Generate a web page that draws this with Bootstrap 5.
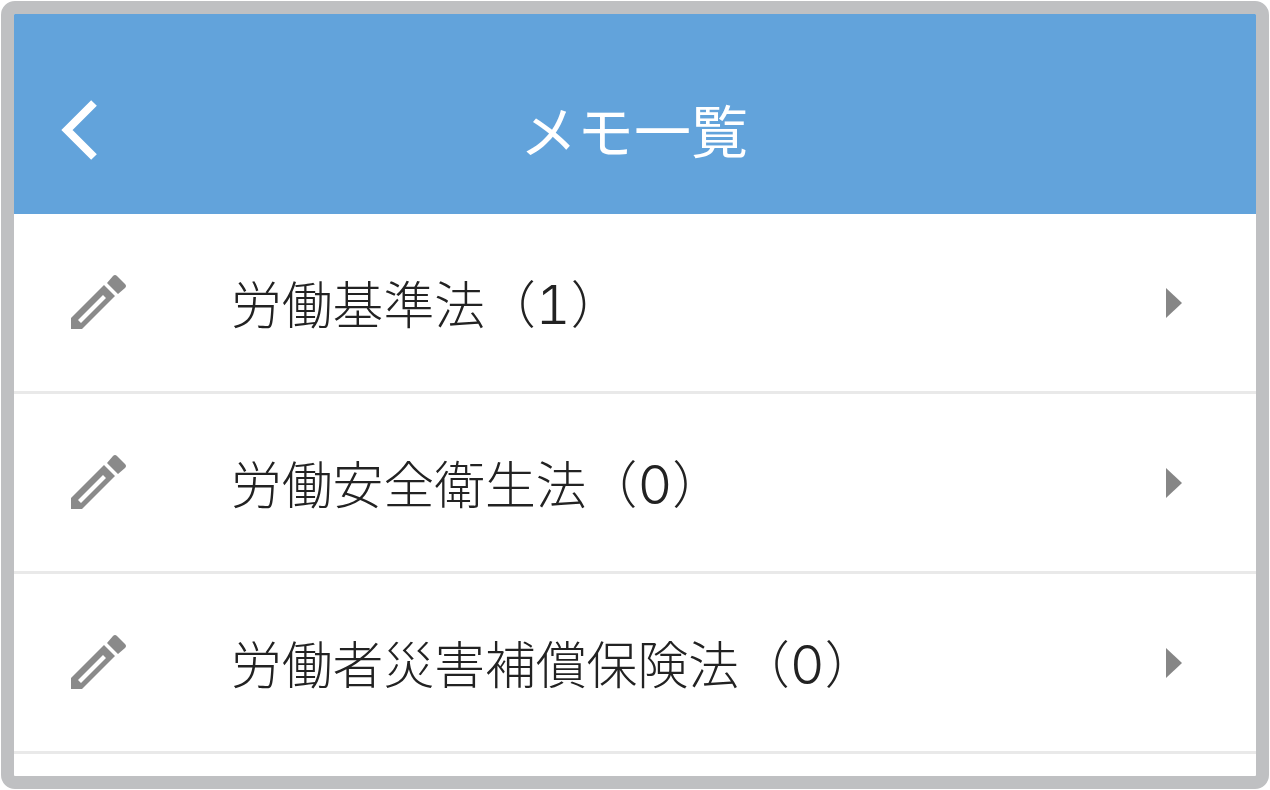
<!DOCTYPE html>
<html lang="ja">
<head>
  <meta charset="UTF-8">
  <title>メモ一覧</title>
  <link href="https://cdn.jsdelivr.net/npm/bootstrap@5.3.3/dist/css/bootstrap.min.css" rel="stylesheet">
  <style>
    html, body {
      height: 100%;
      background-color: #fff;
      overflow: hidden;
    }
    body {
      padding: 1px;
      font-family: "Noto Sans CJK JP", "Liberation Sans", sans-serif;
    }
    .phone-frame {
      height: 788px;
      border: 13px solid #bfc0c2;
      border-radius: 14px;
      background-color: #fff;
      overflow: hidden;
    }
    .memo-header {
      height: 200px;
      padding: 32px 0 0 47px;
      background-color: #62a3db;
      color: #fff;
      font-size: 57px;
      font-weight: 400;
    }
    .memo-title {
      inset: 0;
      padding-right: 2px;
      line-height: 228px;
    }
    .memo-row {
      height: 180px;
      padding: 0 74px 0 57px;
      border-bottom: 3px solid #e9e9e9;
      color: #222;
      font-size: 50.8px;
      font-weight: 300;
    }
    .memo-label {
      margin-left: 104px;
      padding-bottom: 2px;
      line-height: 60px;
    }
    .memo-num {
      font-family: Inter, "Liberation Sans", sans-serif;
      font-size: 54px;
      font-weight: 300;
      font-variant-numeric: tabular-nums;
      line-height: 1;
    }
  </style>
</head>
<body>

<div class="phone-frame">
  <div class="memo-header d-flex align-items-center position-relative">
    <svg class="position-relative z-1" width="38" height="60" viewBox="0 0 38 60"><path d="M33 3 L6 30 L33 57" fill="none" stroke="#fff" stroke-width="8"/></svg>
    <div class="memo-title position-absolute text-center">メモ一覧</div>
  </div>

  <div>
    <div class="memo-row d-flex align-items-center">
      <svg width="56" height="56" viewBox="0 0 56 56"><path d="M36 8 L42 1 Q44 -1 46 1 L54 9 Q56 11 54 13 L47 19 Z M0 43 L33 10 L44 21 L11 54 L0 54 Z M7 45 L10 48 L35 23 L32 20 Z" fill="#8a8a8a" fill-rule="evenodd"/></svg>
      <div class="memo-label flex-grow-1">労働基準法（<span class="memo-num">1</span>）</div>
      <svg width="16" height="30" viewBox="0 0 16 30"><path d="M0 0 L16 15 L0 30 Z" fill="#868686"/></svg>
    </div>
    <div class="memo-row d-flex align-items-center">
      <svg width="56" height="56" viewBox="0 0 56 56"><path d="M36 8 L42 1 Q44 -1 46 1 L54 9 Q56 11 54 13 L47 19 Z M0 43 L33 10 L44 21 L11 54 L0 54 Z M7 45 L10 48 L35 23 L32 20 Z" fill="#8a8a8a" fill-rule="evenodd"/></svg>
      <div class="memo-label flex-grow-1">労働安全衛生法（<span class="memo-num">0</span>）</div>
      <svg width="16" height="30" viewBox="0 0 16 30"><path d="M0 0 L16 15 L0 30 Z" fill="#868686"/></svg>
    </div>
    <div class="memo-row d-flex align-items-center">
      <svg width="56" height="56" viewBox="0 0 56 56"><path d="M36 8 L42 1 Q44 -1 46 1 L54 9 Q56 11 54 13 L47 19 Z M0 43 L33 10 L44 21 L11 54 L0 54 Z M7 45 L10 48 L35 23 L32 20 Z" fill="#8a8a8a" fill-rule="evenodd"/></svg>
      <div class="memo-label flex-grow-1">労働者災害補償保険法（<span class="memo-num">0</span>）</div>
      <svg width="16" height="30" viewBox="0 0 16 30"><path d="M0 0 L16 15 L0 30 Z" fill="#868686"/></svg>
    </div>
  </div>
</div>

</body>
</html>
